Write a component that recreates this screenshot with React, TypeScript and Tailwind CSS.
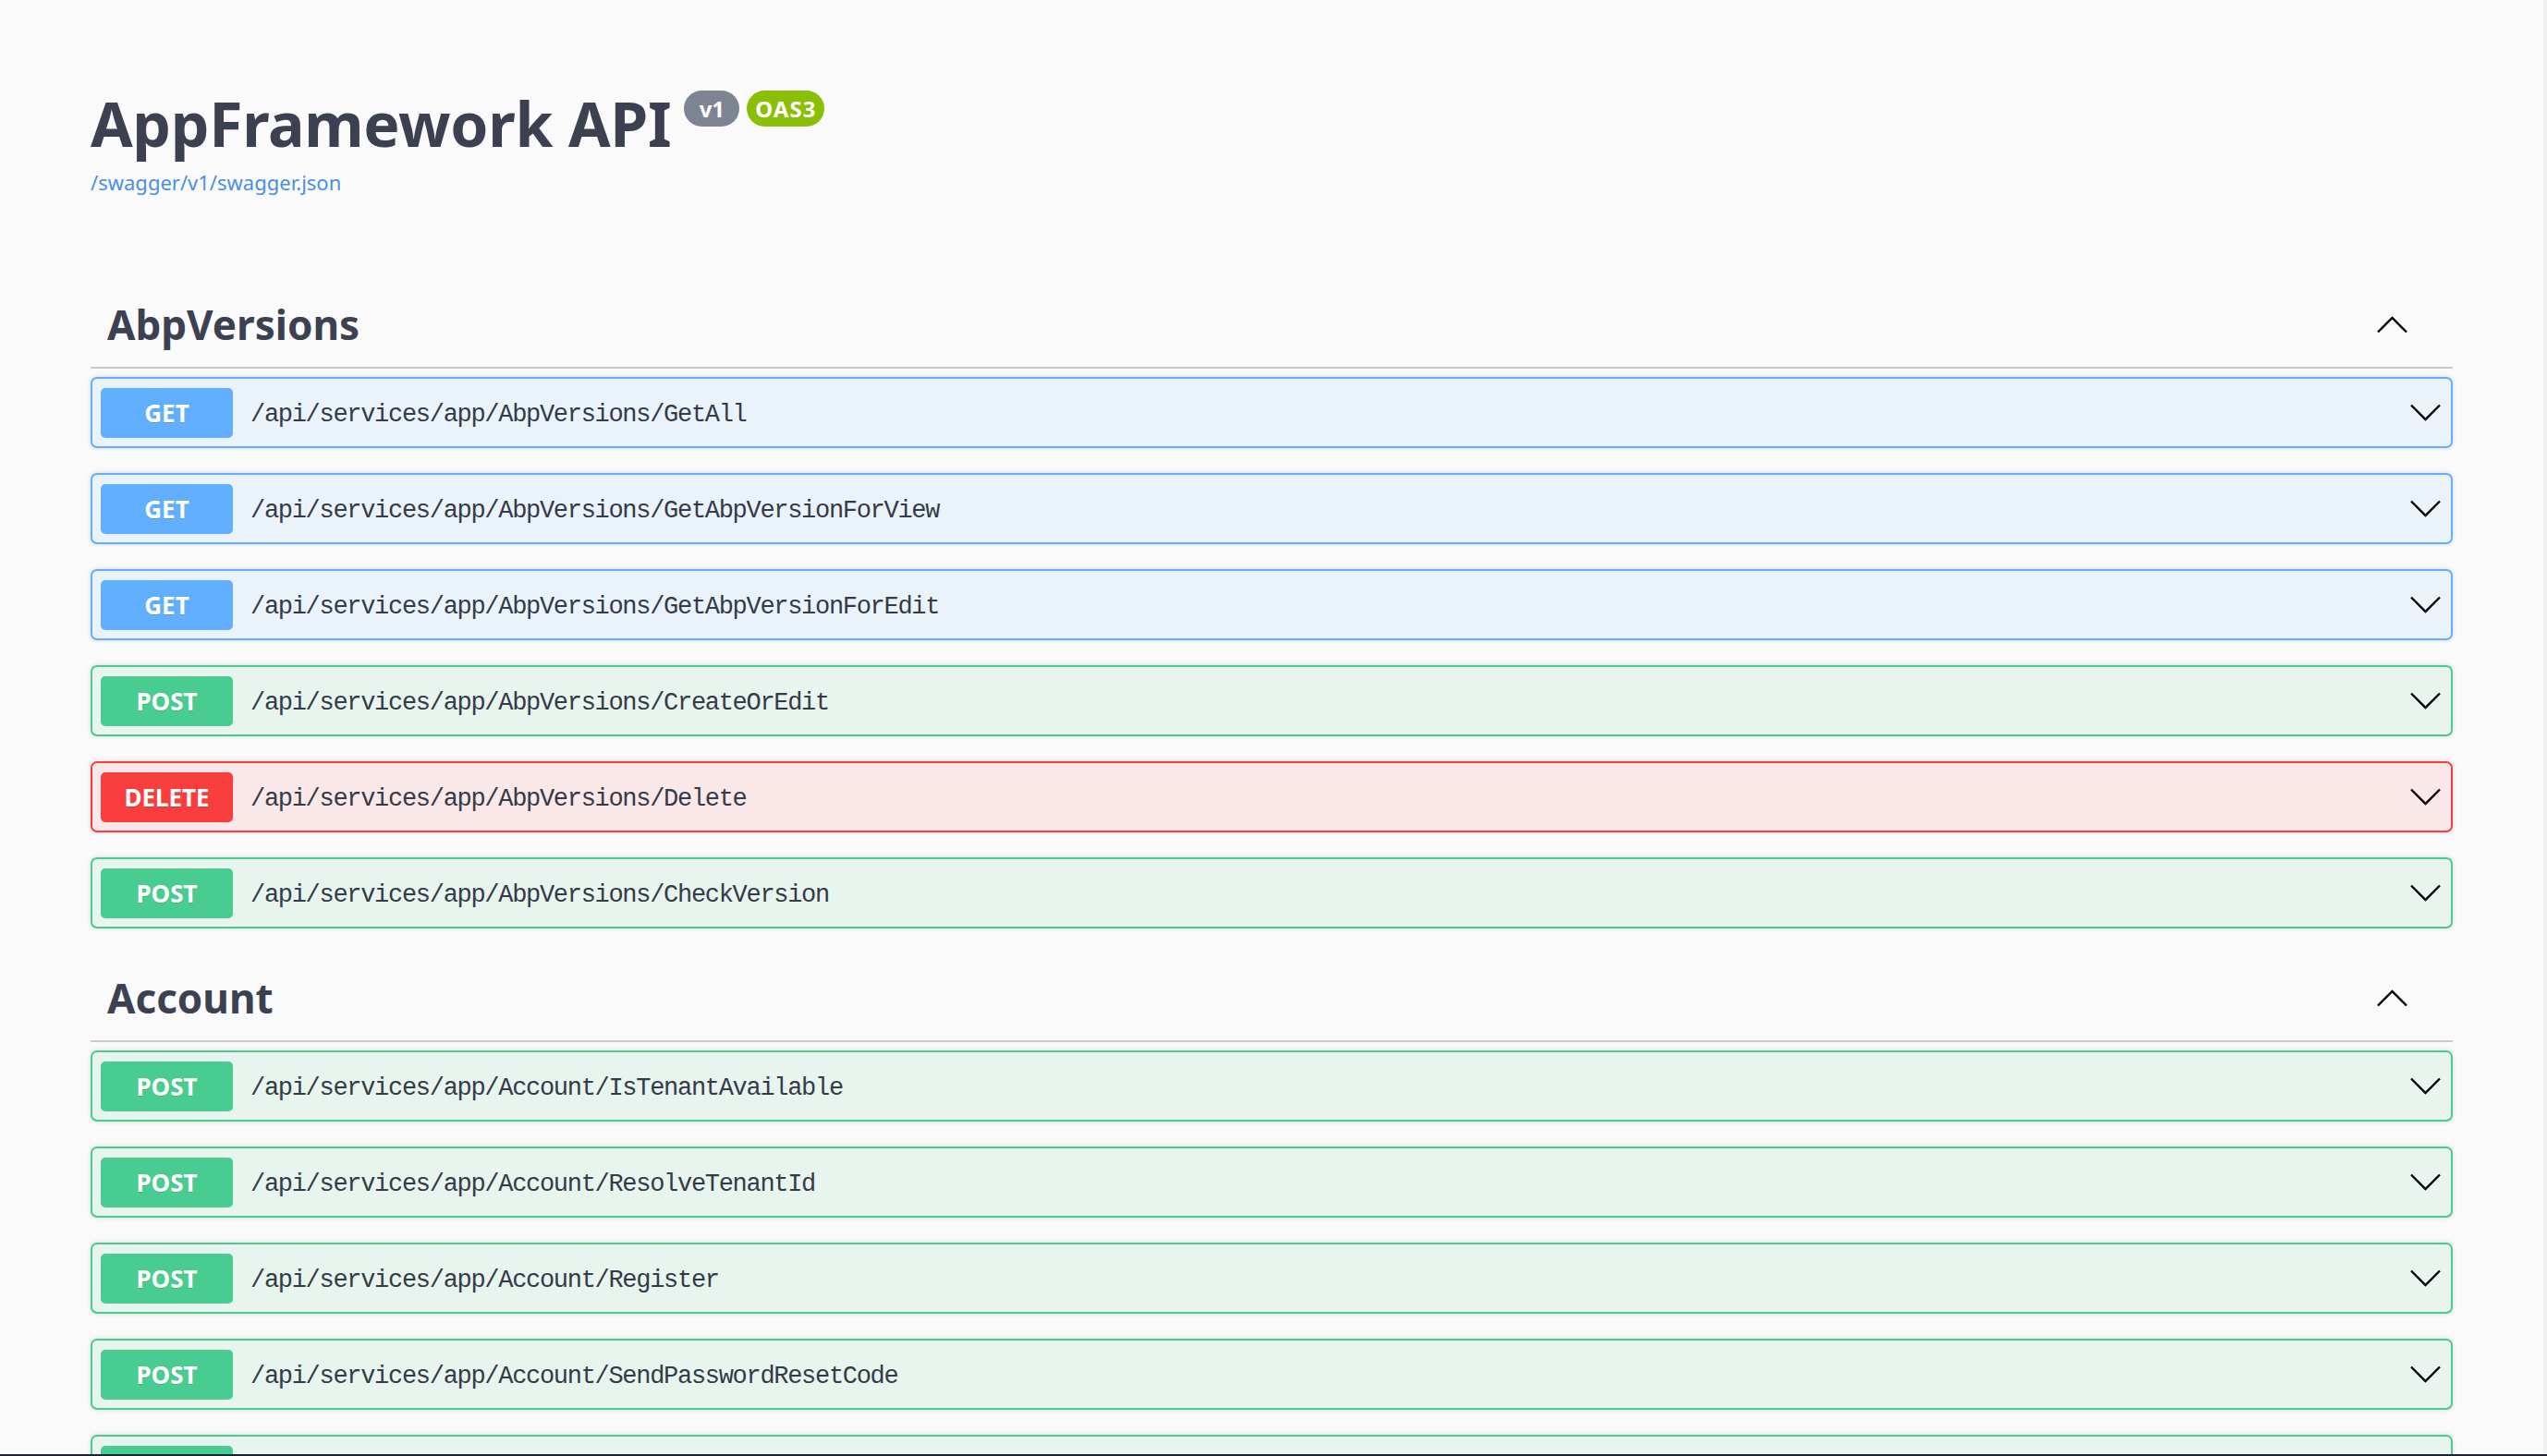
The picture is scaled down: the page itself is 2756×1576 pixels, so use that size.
import React from 'react';

type Method = 'GET' | 'POST' | 'DELETE';

interface Operation {
  method: Method;
  path: string;
}

interface TagSection {
  name: string;
  ops: Operation[];
}

// colours of each method (row tint, border, badge)
const methodStyles: Record<Method, { row: string; badge: string }> = {
  GET: { row: 'bg-[#ebf3fa] border-[#61affe]', badge: 'bg-[#61affe]' },
  POST: { row: 'bg-[#e8f5ef] border-[#49cc90]', badge: 'bg-[#49cc90]' },
  DELETE: { row: 'bg-[#fae7e7] border-[#f93e3e]', badge: 'bg-[#f93e3e]' },
};

const sections: TagSection[] = [
  {
    name: 'AbpVersions',
    ops: [
      { method: 'GET', path: '/api/services/app/AbpVersions/GetAll' },
      { method: 'GET', path: '/api/services/app/AbpVersions/GetAbpVersionForView' },
      { method: 'GET', path: '/api/services/app/AbpVersions/GetAbpVersionForEdit' },
      { method: 'POST', path: '/api/services/app/AbpVersions/CreateOrEdit' },
      { method: 'DELETE', path: '/api/services/app/AbpVersions/Delete' },
      { method: 'POST', path: '/api/services/app/AbpVersions/CheckVersion' },
    ],
  },
  {
    name: 'Account',
    ops: [
      { method: 'POST', path: '/api/services/app/Account/IsTenantAvailable' },
      { method: 'POST', path: '/api/services/app/Account/ResolveTenantId' },
      { method: 'POST', path: '/api/services/app/Account/Register' },
      { method: 'POST', path: '/api/services/app/Account/SendPasswordResetCode' },
      { method: 'POST', path: '/api/services/app/Account/ResetPassword' },
      { method: 'POST', path: '/api/services/app/Account/SendEmailActivationLink' },
    ],
  },
];

const ChevronUp = () => (
  <svg width="33" height="19" viewBox="0 0 33 19" className="shrink-0">
    <polyline points="1,17.5 16.5,2 32,17.5" fill="none" stroke="#000" strokeWidth="2.4" />
  </svg>
);

const ChevronDown = () => (
  <svg width="33" height="19" viewBox="0 0 33 19" className="shrink-0">
    <polyline points="1,1.5 16.5,17 32,1.5" fill="none" stroke="#000" strokeWidth="2.4" />
  </svg>
);

function OperationRow({ op }: { op: Operation }) {
  const s = methodStyles[op.method];
  return (
    <div
      className={`mb-[27px] flex h-[77px] items-center rounded-[7px] border-2 pl-[9px] pr-[11px] shadow-[0_0_5px_rgba(0,0,0,0.15)] ${s.row}`}
    >
      <span
        className={`flex h-[54px] w-[143px] shrink-0 items-center justify-center rounded-[5px] pt-[2px] font-['Noto_Sans',sans-serif] text-[26px] font-bold text-white text-shadow-[0_1px_0_rgba(0,0,0,0.12)] ${s.badge}`}
      >
        {op.method}
      </span>
      <span className="ml-[19px] flex-1 pt-[6px] font-['Liberation_Mono',monospace] text-[27px] tracking-[-1.3px] text-[#343a48]">
        {op.path}
      </span>
      <ChevronDown />
    </div>
  );
}

function Section({ section }: { section: TagSection }) {
  return (
    <div>
      <div className="flex items-center border-b-2 border-[#c9cacf] pb-[24px] pl-[18px] pr-[49px] pt-[26px]">
        <h3 className="flex-1 font-['Noto_Sans',sans-serif] text-[44px] font-bold leading-none text-[#3b4151]">
          {section.name}
        </h3>
        <ChevronUp />
      </div>
      <div className="mt-[9px]">
        {section.ops.map((op) => (
          <OperationRow key={op.path} op={op} />
        ))}
      </div>
    </div>
  );
}

export default function App() {
  return (
    <div className="flex h-screen w-full flex-col overflow-hidden bg-[#fafafa]">
      <div className="flex min-h-0 flex-1">
        <div className="min-w-0 flex-1 overflow-hidden">
          <div className="ml-[98px] w-[2556px] pt-[100px]">
            {/* info */}
            <div className="flex items-start">
              <h2 className="font-['Noto_Sans',sans-serif] text-[66px] font-bold leading-none tracking-[-0.3px] text-[#3b4151]">
                AppFramework API
              </h2>
              <div className="-mt-[2px] ml-[14px] flex gap-[8px]">
                <span className="flex h-[39px] w-[60px] items-center justify-center rounded-full bg-[#7d8492] font-['Noto_Sans',sans-serif] text-[24px] font-bold text-white">
                  v1
                </span>
                <span className="flex h-[39px] w-[84px] items-center justify-center rounded-full bg-[#89bf04] font-['Noto_Sans',sans-serif] text-[24px] font-bold tracking-[1px] text-white">
                  OAS3
                </span>
              </div>
            </div>
            <a className="mt-[20px] block font-['Noto_Sans',sans-serif] text-[22px] leading-none text-[#4990e2]">
              /swagger/v1/swagger.json
            </a>

            <div className="mt-[95px]">
              {sections.map((s) => (
                <Section key={s.name} section={s} />
              ))}
            </div>
          </div>
        </div>
        <div className="w-[4px] shrink-0 bg-[#f0f0f0]" />
      </div>
      <div className="h-[2px] shrink-0 bg-[#1e2235]" />
    </div>
  );
}
